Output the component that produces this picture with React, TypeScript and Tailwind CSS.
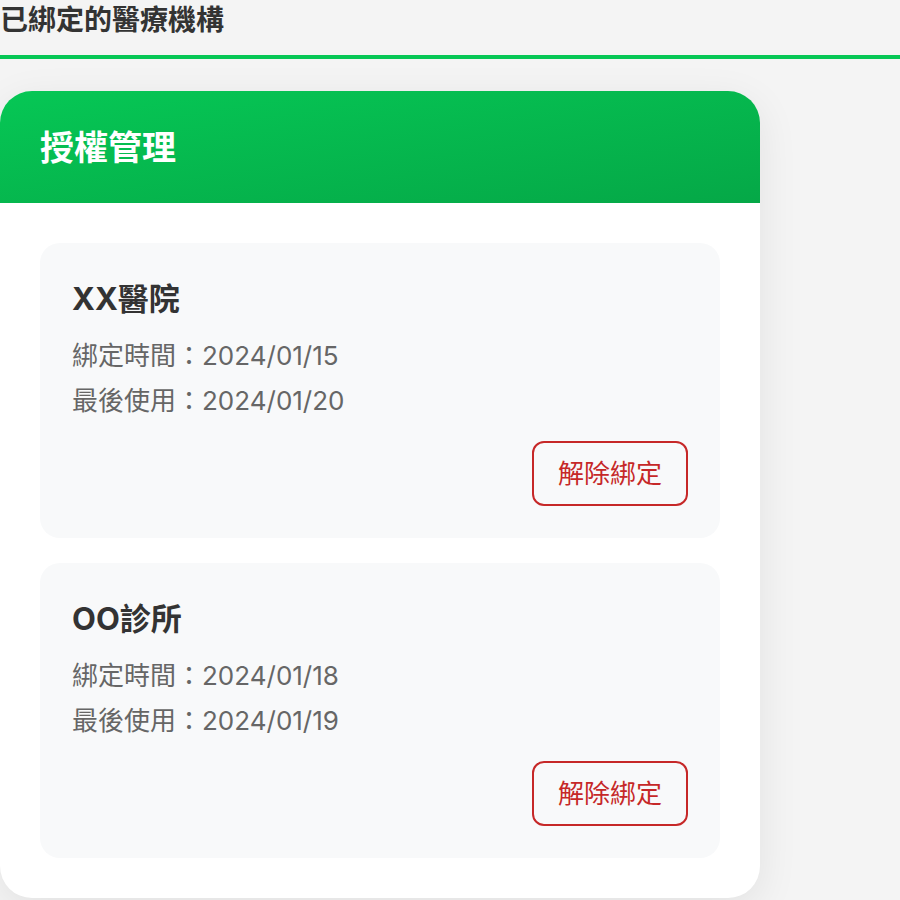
import React from "react";

type Binding = {
  name: string;
  boundAt: string;
  lastUsed: string;
};

const bindings: Binding[] = [
  { name: "XX醫院", boundAt: "2024/01/15", lastUsed: "2024/01/20" },
  { name: "OO診所", boundAt: "2024/01/18", lastUsed: "2024/01/19" },
];

const font = { fontFamily: 'Inter, "Noto Sans CJK TC", "Noto Sans", sans-serif' };

const BindingCard: React.FC<{ item: Binding }> = ({ item }) => (
  <div className="bg-[#f8f9fa] rounded-[20px] p-[32px] flex flex-col">
    <h3 className="pt-[4px] text-[31px] leading-[40px] font-bold text-[#333]">{item.name}</h3>
    <div className="mt-[14px] text-[26px] leading-[45px] text-[#666]">
      <p>綁定時間：{item.boundAt}</p>
      <p>最後使用：{item.lastUsed}</p>
    </div>
    <div className="mt-[18px] flex justify-end">
      <button className="h-[65px] px-[24px] border-2 border-[#c62828] rounded-[12px] text-[26px] text-[#c62828] bg-transparent">
        解除綁定
      </button>
    </div>
  </div>
);

const App: React.FC = () => {
  return (
    <div className="min-h-screen bg-[#f4f4f4]" style={font}>
      <div className="pb-[15px] border-b-4 border-[#06c755]">
        <h2 className="text-[28px] leading-[40px] font-bold text-[#333]">已綁定的醫療機構</h2>
      </div>

      <div className="mt-[32px] w-[760px] bg-white rounded-[32px] overflow-hidden shadow-[0_10px_40px_rgba(0,0,0,0.08)]">
        <div className="h-[112px] px-[40px] flex items-center bg-gradient-to-br from-[#06c755] to-[#05a847]">
          <h1 className="text-[34px] font-bold text-white">授權管理</h1>
        </div>
        <div className="p-[40px] flex flex-col gap-[25px]">
          {bindings.map((b) => (
            <BindingCard key={b.name} item={b} />
          ))}
        </div>
      </div>
    </div>
  );
};

export default App;
